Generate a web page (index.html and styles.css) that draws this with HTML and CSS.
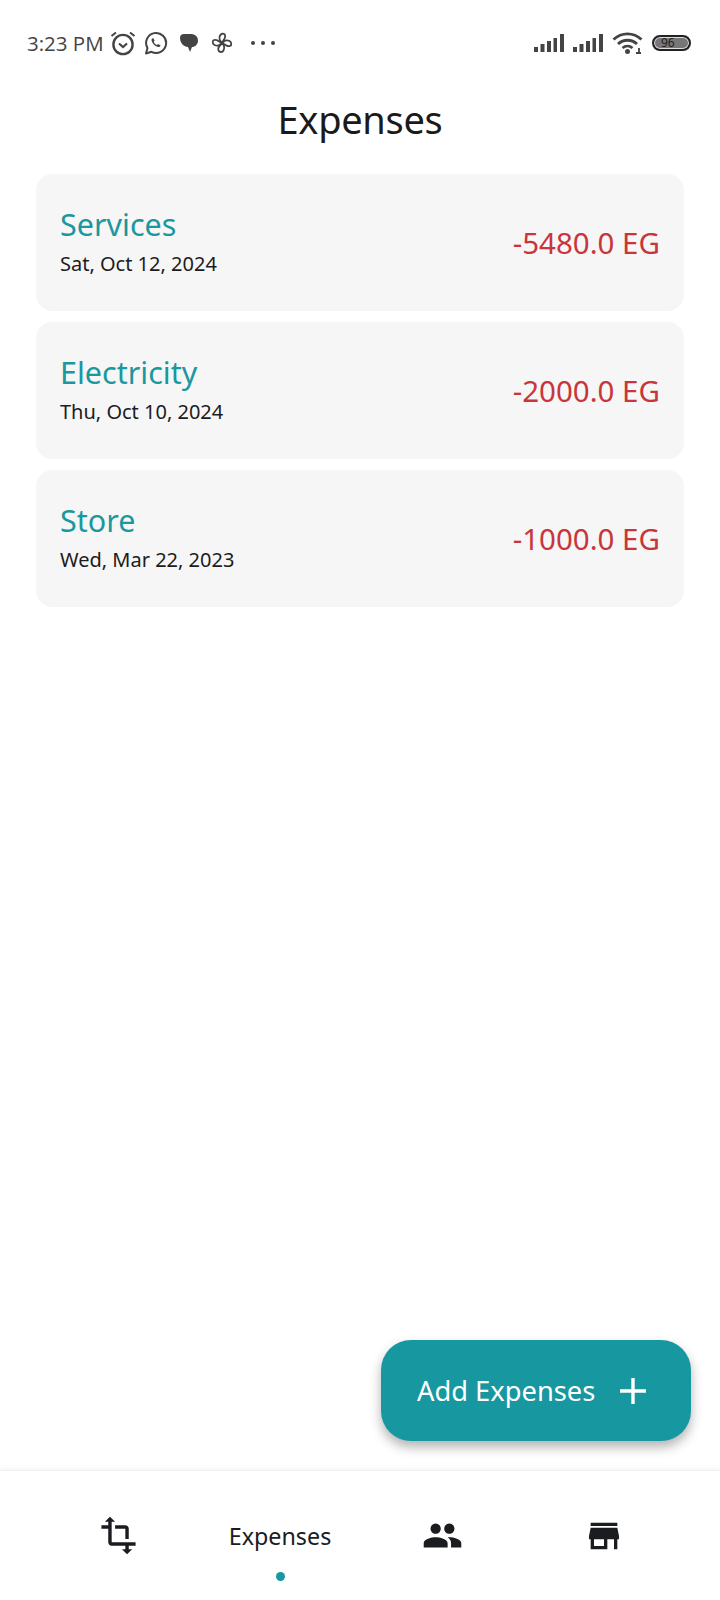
FILE: index.html
```html
<!DOCTYPE html>
<html lang="en">
<head>
	<meta charset="UTF-8">
	<title>Expenses</title>
	<link rel="stylesheet" href="styles.css">
</head>
<body>
	<div id="page">
		<div class="status">
			<div class="status-group">
				<span class="time">3:23 PM</span>
				<svg class="ic-alarm" width="26" height="26" viewBox="0 0 26 26" fill="none" stroke="#444" stroke-width="2.4">
					<circle cx="13" cy="14.5" r="9.6"/>
					<path d="M9 13.5l4 3.5 4-3.5" stroke-width="2.2"/>
					<path d="M1.5 6L6 2.5M24.500 6L20 2.500" stroke-width="2"/>
				</svg>
				<svg class="ic-whatsapp" width="24" height="24" viewBox="0 0 24 24" fill="none" stroke="#444" stroke-width="2">
					<path d="M2 22.500l1.500-5.500a10 10 0 1 1 4 3.800z" stroke-linejoin="round"/>
					<path d="M8 7.500c-.8 1 -.6 2.800 1 5s3.800 3.600 5.500 3.600c1.200 0 1.900-.8 2-1.800l-2.500-1.300-1 1c-1.500-.5-2.800-1.900-3.300-3.300l.9-1-1.200-2.500z" fill="#444" stroke="none"/>
				</svg>
				<svg class="ic-chat" width="20" height="22" viewBox="0 0 20 22" fill="#444">
					<path d="M1 6c0-2.500 1.500-4 4-4h6c4 0 8 1.500 8 6.500 0 4-3 6.500-6 6.500l-2 5-2-5c-4 0-8-4-8-9z"/>
				</svg>
				<svg class="ic-fan" width="24" height="24" viewBox="0 0 24 24" fill="none" stroke="#444" stroke-width="1.800" stroke-linejoin="round">
					<path d="M12 11.500c-2-1-3.500-4-2-7 1-2 4-2.500 5-.5 1 2.500-1 5-3 7.500z"/>
					<path d="M12.500 12c1-2 4-3.500 7-2 2 1 2.500 4 .5 5-2.500 1-5-1-7.500-3z"/>
					<path d="M12 12.500c2 1 3 4 1.500 7-1 2-4 2-5 0-1-2.500 1-5 3.500-7z"/>
					<path d="M11.500 12c-1 2-4 3.500-7 2-2-1-2.500-4-.5-5 2.500-1 5 1 7.500 3z"/>
				</svg>
				<span class="dots"><i></i><i></i><i></i></span>
			</div>
			<div class="status-group right">
				<svg width="31" height="20" viewBox="0 0 31 20" fill="#444">
					<rect x="0" y="14" width="4" height="5"/><rect x="6.500" y="11" width="4" height="8"/><rect x="13" y="8" width="4" height="11"/><rect x="19.500" y="5" width="3.500" height="14"/><rect x="26" y="1" width="4" height="18"/>
				</svg>
				<svg width="31" height="20" viewBox="0 0 31 20" fill="#444">
					<rect x="0" y="14" width="4" height="5"/><rect x="6.500" y="11" width="4" height="8"/><rect x="13" y="8" width="4" height="11"/><rect x="19.500" y="5" width="3.500" height="14"/><rect x="26" y="1" width="4" height="18"/>
				</svg>
				<svg class="ic-wifi" width="31" height="24" viewBox="0 0 31 24" fill="none" stroke="#444" stroke-width="2.800">
					<path d="M1.500 8.500c8-7.500 20-7.500 28 0"/>
					<path d="M6 13c5.500-5 13.500-5 19 0"/>
					<path d="M10.500 17c3-2.500 7-2.500 10 0"/>
					<circle cx="15.500" cy="20.500" r="2.500" fill="#444" stroke="none"/>
					<path d="M24 22h5M27 17v5" stroke-width="1.800"/>
				</svg>
				<div class="battery"><span>96</span></div>
			</div>
		</div>

		<h1 class="title">Expenses</h1>

		<div class="list">
			<div class="card">
				<div class="card-text">
					<p class="card-name">Services</p>
					<p class="card-date">Sat, Oct 12, 2024</p>
				</div>
				<span class="amount">-5480.0 EG</span>
			</div>
			<div class="card">
				<div class="card-text">
					<p class="card-name">Electricity</p>
					<p class="card-date">Thu, Oct 10, 2024</p>
				</div>
				<span class="amount">-2000.0 EG</span>
			</div>
			<div class="card">
				<div class="card-text">
					<p class="card-name">Store</p>
					<p class="card-date">Wed, Mar 22, 2023</p>
				</div>
				<span class="amount">-1000.0 EG</span>
			</div>
		</div>

		<div class="fab">
			<span>Add Expenses</span>
			<svg width="28" height="28" viewBox="0 0 28 28" stroke="#fff" stroke-width="3.400">
				<path d="M1 14h26M14 1v26"/>
			</svg>
		</div>

		<div class="nav">
			<div class="nav-item">
				<svg width="41" height="41" viewBox="0 0 24 24" fill="#1b1c20">
					<path d="M22 18v-2H8V4h2L7 1 4 4h2v2H2v2h4v8c0 1.100.9 2 2 2h8v2h-2l3 3 3-3h-2v-2h4zM10 8h6v6h2V8c0-1.100-.9-2-2-2h-6v2z"/>
				</svg>
			</div>
			<div class="nav-item active">
				<span class="nav-label">Expenses</span>
				<i class="nav-dot"></i>
			</div>
			<div class="nav-item">
				<svg width="41" height="41" viewBox="0 0 24 24" fill="#1b1c20">
					<path d="M16 11c1.660 0 2.990-1.340 2.990-3S17.660 5 16 5c-1.660 0-3 1.340-3 3s1.340 3 3 3zm-8 0c1.660 0 2.990-1.340 2.990-3S9.660 5 8 5C6.340 5 5 6.340 5 8s1.340 3 3 3zm0 2c-2.330 0-7 1.170-7 3.500V19h14v-2.500c0-2.330-4.670-3.500-7-3.500zm8 0c-.29 0-.62.02-.97.05 1.160.84 1.970 1.970 1.970 3.450V19h6v-2.500c0-2.330-4.670-3.500-7-3.500z"/>
				</svg>
			</div>
			<div class="nav-item">
				<svg width="40" height="40" viewBox="0 0 24 24" fill="#1b1c20">
					<path d="M20 4H4v2h16V4zm1 10v-2l-1-5H4l-1 5v2h1v6h10v-6h4v6h2v-6h1zm-9 4H6v-4h6v4z"/>
				</svg>
			</div>
		</div>
	</div>
</body>
</html>
```

FILE: styles.css
```css
* {
	box-sizing: border-box;
}
body {
	margin: 0;
	background: #fff;
	font-family: "Noto Sans", "Open Sans", sans-serif;
}
p, h1 {
	margin: 0;
}
#page {
	position: relative;
	width: 720px;
	height: 1600px;
	display: flex;
	flex-direction: column;
	overflow: hidden;
}

/* status bar */
.status {
	height: 93px;
	padding: 30px 29px 0 27px;
	display: flex;
	justify-content: space-between;
	align-items: flex-start;
}
.status-group {
	height: 26px;
	display: flex;
	align-items: center;
}
.right {
	gap: 8px;
}
.time {
	font-family: "Open Sans", sans-serif;
	font-size: 20.5px;
	color: #444;
	margin-right: 6px;
}
.ic-alarm {
	margin-right: 8px;
}
.ic-whatsapp {
	margin-right: 11px;
}
.ic-chat {
	margin-right: 11px;
}
.dots {
	display: flex;
	gap: 6px;
	margin-left: 17px;
}
.dots i {
	width: 4px;
	height: 4px;
	border-radius: 50%;
	background: #444;
}
.ic-wifi {
	margin-right: 1px;
}
.battery {
	width: 39px;
	height: 16px;
	border: 2px solid #222;
	border-radius: 8px;
	background: #777;
	box-shadow: inset 0 0 0 1px #ddd;
	font-size: 12px;
	line-height: 12px;
	color: #222;
	padding-left: 7px;
}

.title {
	font-size: 38px;
	font-weight: 400;
	line-height: 52px;
	text-align: center;
	color: #1a1a1a;
	height: 81px;
	letter-spacing: -0.3px;
}

/* expense cards */
.list {
	padding: 0 36px;
	display: flex;
	flex-direction: column;
	gap: 11px;
}
.card {
	height: 137px;
	padding: 0 24px;
	background: #f6f6f6;
	border-radius: 16px;
	display: flex;
	justify-content: space-between;
	align-items: center;
}
.card-text {
	padding-bottom: 4px;
}
.card-name {
	font-size: 30.5px;
	line-height: 40px;
	color: #1b979f;
}
.card-date {
	font-size: 20px;
	line-height: 28px;
	color: #1c1c1c;
	margin-top: 6px;
}
.amount {
	font-size: 29.5px;
	color: #c9353a;
}

.fab {
	position: absolute;
	left: 381px;
	top: 1340px;
	width: 310px;
	height: 101px;
	padding-left: 36px;
	background: #1797a0;
	border-radius: 30px;
	box-shadow: 0 6px 12px rgba(0, 0, 0, 0.3);
	display: flex;
	align-items: center;
	gap: 24px;
	color: #fff;
	font-size: 27.3px;
}

/* bottom nav */
.nav {
	margin-top: auto;
	height: 130px;
	padding: 0 35px 0 37px;
	border-top: 1px solid #f0f0f0;
	box-shadow: 0 -2px 4px rgba(0, 0, 0, 0.04);
	display: grid;
	grid-template-columns: repeat(4, 1fr);
	align-items: center;
	justify-items: center;
}
.nav-item {
	position: relative;
	display: flex;
	justify-content: center;
}
.nav-label {
	font-size: 23.3px;
	color: #1b1c20;
}
.nav-dot {
	position: absolute;
	left: 50%;
	bottom: -29px;
	width: 9px;
	height: 9px;
	margin-left: -4px;
	border-radius: 50%;
	background: #1797a0;
}
```
